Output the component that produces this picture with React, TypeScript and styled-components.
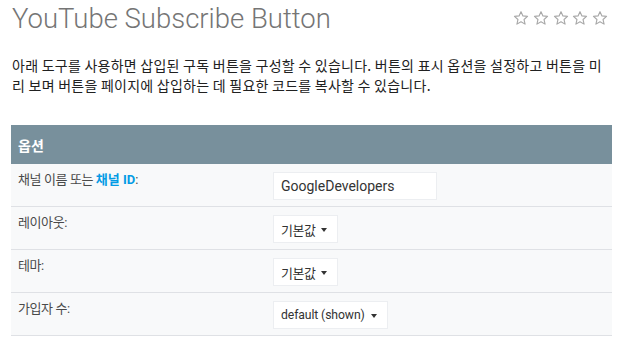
import type { ReactNode } from "react";
import styled, { createGlobalStyle } from "styled-components";

const GlobalStyle = createGlobalStyle`
  html, body {
    margin: 0;
    padding: 0;
    background: #fff;
  }
  body {
    font-family: Roboto, "Noto Sans CJK KR", sans-serif;
    color: #212121;
  }
`;

type Option = {
  label: ReactNode;
  kind: "input" | "select";
  value: string;
};

function Star() {
  return (
    <svg width="16" height="16" viewBox="0 0 24 24" fill="none">
      <path
        d="M12 2.5l2.9 6.4 6.9.7-5.2 4.7 1.5 6.9L12 17.6l-6.1 3.6 1.5-6.9-5.2-4.7 6.9-.7z"
        stroke="#a8a8a8"
        strokeWidth="1.7"
        strokeLinejoin="round"
      />
    </svg>
  );
}

/**
 * 구독 버튼 설정 페이지
 */
function App() {
  const options: Option[] = [
    {
      label: (
        <>
          채널 이름 또는 <Accent>채널 ID</Accent>:
        </>
      ),
      kind: "input",
      value: "GoogleDevelopers",
    },
    { label: "레이아웃:", kind: "select", value: "기본값" },
    { label: "테마:", kind: "select", value: "기본값" },
    { label: "가입자 수:", kind: "select", value: "default (shown)" },
  ];

  return (
    <>
      <GlobalStyle />
      <Page>
        <Header>
          <Title>YouTube Subscribe Button</Title>
          <Stars>
            {[...Array(5)].map((_, idx) => (
              <Star key={idx} />
            ))}
          </Stars>
        </Header>

        <Intro>
          아래 도구를 사용하면 삽입된 구독 버튼을 구성할 수 있습니다. 버튼의 표시 옵션을 설정하고 버튼을 미리 보며 버튼을
          페이지에 삽입하는 데 필요한 코드를 복사할 수 있습니다.
        </Intro>

        <Table>
          <TableHead>옵션</TableHead>
          {options.map(({ label, kind, value }, idx) => (
            <Row key={idx}>
              <Label>{label}</Label>
              <div>
                {kind === "input" ? (
                  <TextInput>{value}</TextInput>
                ) : (
                  <Select $latin={/^[a-z]/.test(value)}>
                    {value}
                    <Caret />
                  </Select>
                )}
              </div>
            </Row>
          ))}
        </Table>
      </Page>
    </>
  );
}

export default App;

const Page = styled.div`
  padding: 4px 18px 0 11px;
`;

const Header = styled.div`
  display: flex;
  justify-content: space-between;
  align-items: flex-start;
  padding-left: 1px;
`;

const Title = styled.h1`
  margin: 0;
  font-family: Roboto, sans-serif;
  font-size: 27.5px;
  font-weight: 300;
  color: #757575;
  line-height: 30px;
`;

const Stars = styled.div`
  display: flex;
  gap: 3.75px;
  padding-top: 6px;
  padding-right: 4px;
`;

const Intro = styled.p`
  margin: 21px 0 0;
  padding-left: 1px;
  font-family: "Noto Sans CJK KR", sans-serif;
  font-size: 14px;
  letter-spacing: 0.25px;
  line-height: 20px;
  color: #212121;
  word-break: break-all;
`;

const Table = styled.div`
  margin-top: 30px;
  width: 601px;
`;

const TableHead = styled.div`
  height: 39px;
  display: flex;
  align-items: center;
  padding-left: 7px;
  background: #78909c;
  color: #fff;
  font-family: "Noto Sans CJK KR", sans-serif;
  font-size: 14px;
  font-weight: 700;
`;

const Row = styled.div`
  display: grid;
  grid-template-columns: 262px 1fr;
  padding: 8px 0 6px;
  background: #f8f9fa;
  border-bottom: 1px solid #dfe1e5;
`;

const Label = styled.div`
  padding-left: 7px;
  font-family: Roboto, "Noto Sans CJK KR", sans-serif;
  font-size: 13px;
  letter-spacing: -0.4px;
  line-height: 16px;
  color: #4a4a4a;
`;

const Accent = styled.span`
  color: #039be5;
  font-weight: 700;
  letter-spacing: 0;
`;

const TextInput = styled.div`
  width: 164px;
  height: 28px;
  box-sizing: border-box;
  display: flex;
  align-items: center;
  padding-left: 7px;
  background: #fff;
  border: 1px solid #eceef1;
  font-family: Roboto, sans-serif;
  font-size: 14px;
  color: #333;
`;

const Select = styled.div<{ $latin?: boolean }>`
  display: inline-flex;
  align-items: center;
  gap: 6px;
  height: 28px;
  box-sizing: border-box;
  padding: 0 10px 0 7px;
  background: #fff;
  border: 1px solid #eceef1;
  font-family: Roboto, "Noto Sans CJK KR", sans-serif;
  font-size: ${(props) => (props.$latin ? "12.2px" : "13px")};
  letter-spacing: ${(props) => (props.$latin ? "-0.1px" : "-0.5px")};
  color: #333;
`;

const Caret = styled.span`
  width: 0;
  height: 0;
  border-left: 3.5px solid transparent;
  border-right: 3.5px solid transparent;
  border-top: 4px solid #333;
  margin-top: 1px;
`;
